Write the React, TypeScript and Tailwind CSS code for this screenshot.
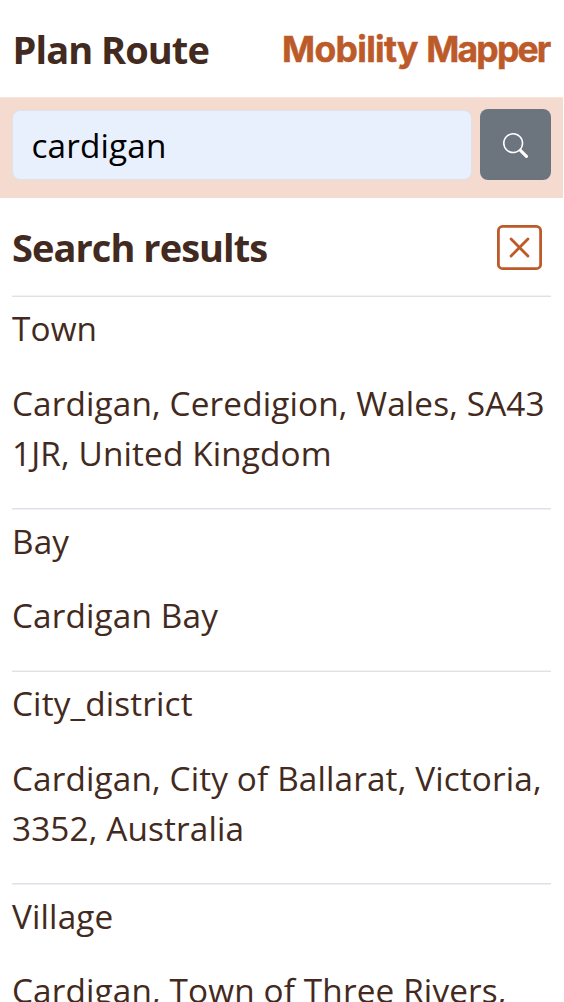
import { BsSearch, BsXSquare } from "react-icons/bs";

const above = "shadow-[0_-1px_0_#f0f2f4] pt-[6px]";
const below = "shadow-[inset_0_1px_0_#eef0f3] pt-[7px]";

const results = [
  { kind: "Town", name: "Cardigan, Ceredigion, Wales, SA43 1JR, United Kingdom", box: `h-[212px] ${above}`, gap: "mb-[25px]" },
  { kind: "Bay", name: "Cardigan Bay", box: `h-[163px] ${below}`, gap: "mb-[24px]" },
  { kind: "City_district", name: "Cardigan, City of Ballarat, Victoria, 3352, Australia", box: `h-[212px] ${above}`, gap: "mb-[25px]" },
  { kind: "Village", name: "Cardigan, Town of Three Rivers,", box: `h-[163px] ${below}`, gap: "mb-[24px]" },
];

export default function App() {
  return (
    <div className="h-[1002px] w-[563px] overflow-hidden bg-white font-['Open_Sans',sans-serif] text-[33.33px] leading-[50px] text-[#432a20]">
      <header className="flex h-[97px] items-center justify-between pr-[13.5px] pl-[12.6px]">
        <h1 className="text-[38px] font-bold tracking-[-0.95px] whitespace-nowrap">Plan Route</h1>
        <div className="flex gap-[8.5px] pt-[2px] font-['Inter',sans-serif] text-[35.5px] font-bold whitespace-nowrap text-[#bd5a2a] [-webkit-text-stroke:0.5px_#bd5a2a]">
          <span className="tracking-[-0.7px]">Mobility</span>
          <span className="tracking-[-1.8px]">Mapper</span>
        </div>
      </header>
      <form className="flex h-[101px] gap-2 border-t border-[#f5e5de] bg-[#f5dbcf] px-[12px] pt-[11px]">
        <input
          type="text"
          aria-label="Search"
          defaultValue="cardigan"
          className="mt-[0.5px] h-[70px] w-[460px] rounded-[8px] border border-[#dee2e6] bg-[#e8f0fe] px-[18.5px] tracking-[0.13px] text-black outline-none"
        />
        <button type="button" aria-label="Search" className="flex h-[71px] w-[71px] items-center justify-center rounded-[8px] bg-[#6c757d] pt-px text-white">
          <BsSearch className="size-[25px]" />
        </button>
      </form>
      <section className="px-[12px]">
        <div className="flex h-[98px] items-center justify-between pt-px pr-[9.5px]">
          <h2 className="pb-[2px] text-[38px] font-bold tracking-[-0.95px] whitespace-nowrap">Search results</h2>
          <button type="button" aria-label="Close" className="text-[#bd5a2a]">
            <BsXSquare className="size-[45px]" />
          </button>
        </div>
        {results.map((r) => (
          <article key={r.kind} className={`border-t border-[#dee2e6] ${r.box}`}>
            <p className={`tracking-[0.13px] ${r.gap}`}>{r.kind}</p>
            <p className="tracking-[0.13px]">{r.name}</p>
          </article>
        ))}
      </section>
    </div>
  );
}
